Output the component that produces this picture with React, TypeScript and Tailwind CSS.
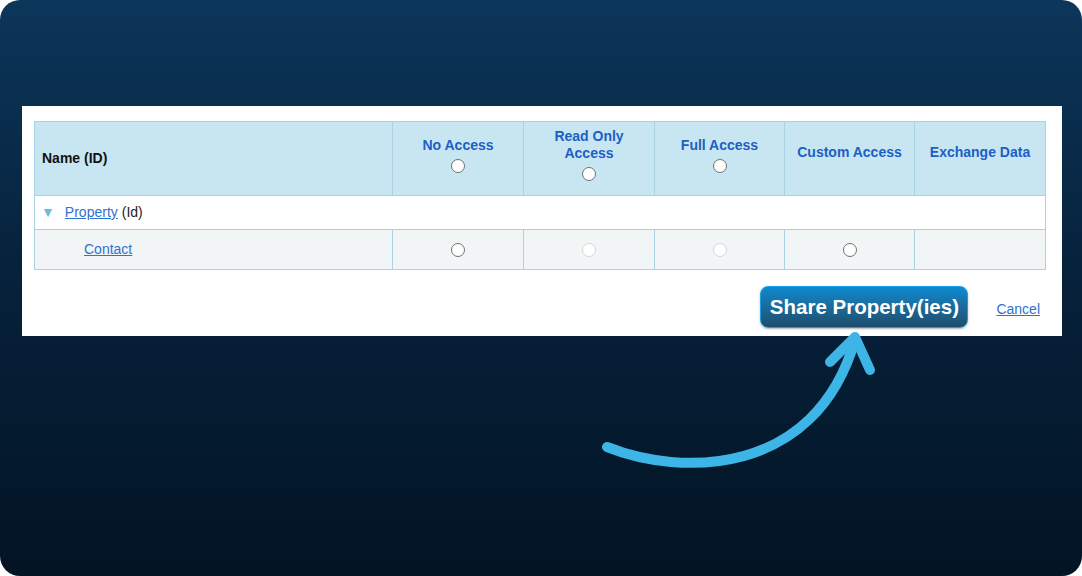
import React from "react";

const Radio = ({ disabled = false }: { disabled?: boolean }) => (
  <span
    className={`inline-block w-[14px] h-[14px] rounded-full bg-white border-[1.5px] ${
      disabled ? "border-[#d3d7d9]" : "border-[#707070]"
    }`}
  />
);

const headers = [
  { label: ["No Access"], radio: true },
  { label: ["Read Only", "Access"], radio: true },
  { label: ["Full Access"], radio: true },
  { label: ["Custom Access"], radio: false },
  { label: ["Exchange Data"], radio: false },
];

export default function App() {
  return (
    <div className="w-[1082px] h-[576px] bg-white" style={{ fontFamily: '"Liberation Sans", Arial, sans-serif' }}>
      <div className="relative w-full h-full rounded-[20px] bg-gradient-to-b from-[#0c365a] via-[#06213a] to-[#031424] pt-[106px] pl-[22px]">
        <div className="w-[1040px] h-[230px] bg-white pt-[15px] pl-[12px] pr-[17px]">
          <table className="w-[1011px] border-collapse table-fixed">
            <colgroup>
              <col className="w-[358px]" />
              <col className="w-[131px]" />
              <col className="w-[131px]" />
              <col className="w-[130px]" />
              <col className="w-[130px]" />
              <col className="w-[131px]" />
            </colgroup>
            <thead>
              <tr className="h-[74px] bg-[#c8e6f2]">
                <th className="border border-[#a9d2e3] text-left pl-[7px] text-[14px] font-bold text-[#111]">
                  Name (ID)
                </th>
                {headers.map((h) => (
                  <th
                    key={h.label.join(" ")}
                    className={`border border-[#a9d2e3] text-center align-middle text-[14px] leading-[17px] font-bold text-[#1c5fc4] ${
                      h.radio ? "pb-[8px]" : "pb-[12px]"
                    }`}
                  >
                    <div className="flex flex-col items-center">
                      {h.label.map((l) => (
                        <span key={l}>{l}</span>
                      ))}
                      {h.radio && (
                        <span className="mt-[5px] flex">
                          <Radio />
                        </span>
                      )}
                    </div>
                  </th>
                ))}
              </tr>
            </thead>
            <tbody>
              <tr className="h-[34px] bg-white">
                <td colSpan={6} className="border border-[#a9d2e3] pl-[6px] text-[14px]">
                  <div className="flex items-center">
                    <span className="text-[#6fb8de] text-[14px] mr-[10px]">▼</span>
                    <a href="#" className="text-[#2f72d0] underline">
                      Property
                    </a>
                    <span className="ml-[4px] text-[#222]">(Id)</span>
                  </div>
                </td>
              </tr>
              <tr className="h-[40px] bg-[#f2f5f6]">
                <td className="border border-[#a9d2e3] pl-[49px] text-[14px]">
                  <a href="#" className="text-[#2f72d0] underline">
                    Contact
                  </a>
                </td>
                <td className="border border-[#a9d2e3] text-center">
                  <span className="flex justify-center">
                    <Radio />
                  </span>
                </td>
                <td className="border border-[#a9d2e3] text-center">
                  <span className="flex justify-center">
                    <Radio disabled />
                  </span>
                </td>
                <td className="border border-[#a9d2e3] text-center">
                  <span className="flex justify-center">
                    <Radio disabled />
                  </span>
                </td>
                <td className="border border-[#a9d2e3] text-center">
                  <span className="flex justify-center">
                    <Radio />
                  </span>
                </td>
                <td className="border border-[#a9d2e3]" />
              </tr>
            </tbody>
          </table>
          <div className="flex items-center justify-end mt-[16px] pr-[5px]">
            <button className="h-[42px] w-[208px] rounded-[8px] border-[1.5px] border-[#1f9ee6] bg-gradient-to-b from-[#0a8ad0] to-[#1d4d6c] text-white font-bold text-[20.5px] shadow-[0_1px_2px_rgba(0,0,0,0.3)]">
              Share Property(ies)
            </button>
            <a href="#" className="ml-[28px] mt-[4px] text-[14px] text-[#2f72d0] underline">
              Cancel
            </a>
          </div>
        </div>
        <svg
          className="absolute left-0 top-0 pointer-events-none"
          width="1082"
          height="576"
          viewBox="0 0 1082 576"
          fill="none"
        >
          <path
            d="M607 447 C 680 476, 815 478, 855 340"
            stroke="#3db5e6"
            strokeWidth="10"
            strokeLinecap="round"
          />
          <path
            d="M830 362 L855 337 L870 370"
            stroke="#3db5e6"
            strokeWidth="10"
            strokeLinecap="round"
            strokeLinejoin="round"
          />
        </svg>
      </div>
    </div>
  );
}
